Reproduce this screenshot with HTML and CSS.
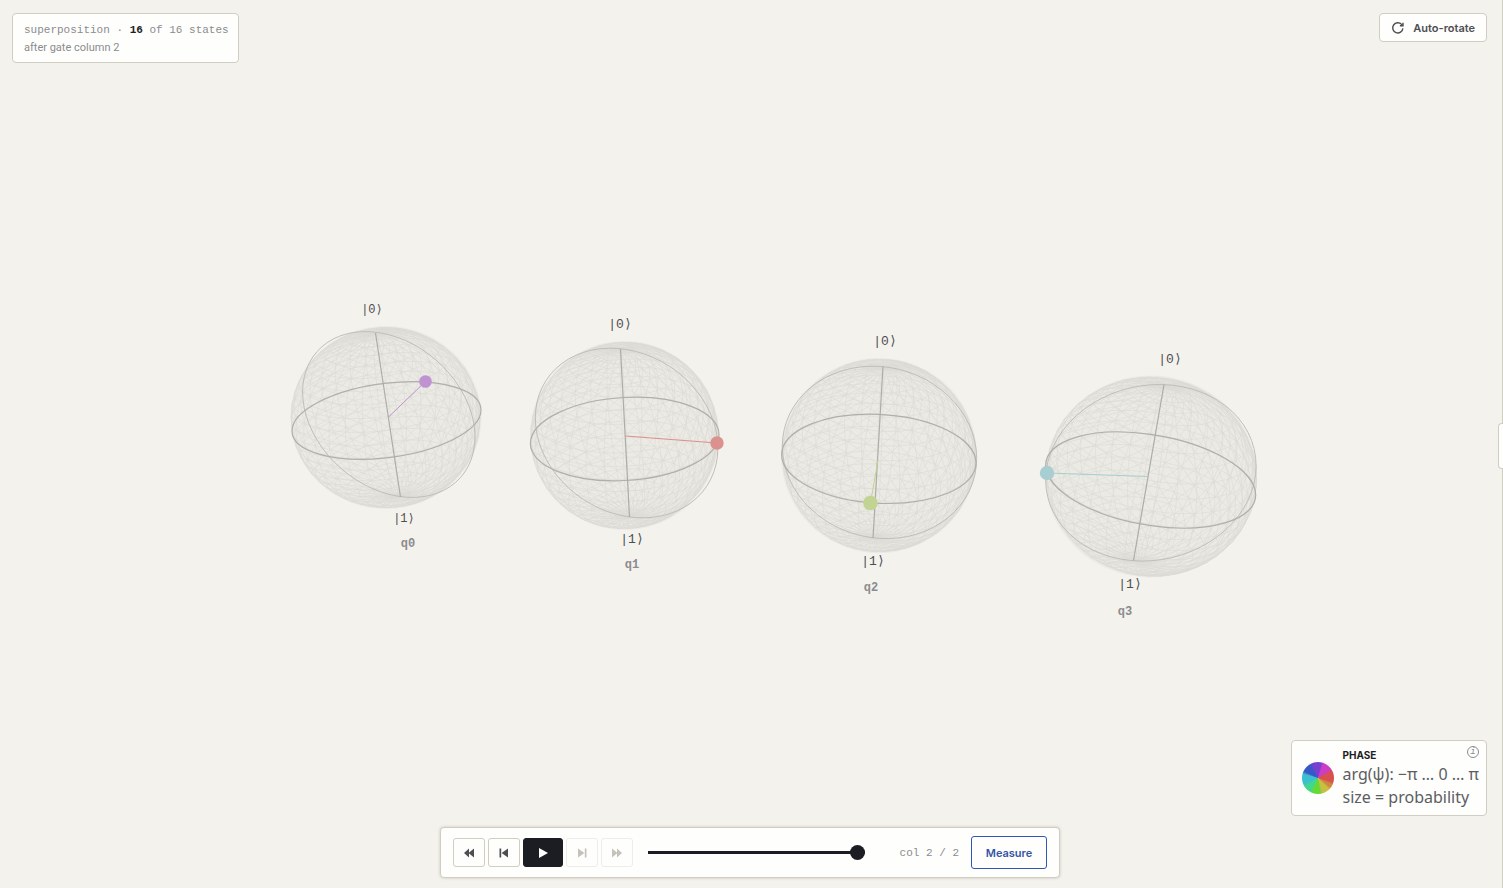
FILE: index.html
```html
<!DOCTYPE html>
<html lang="en">

<head>
	<meta charset="UTF-8">
	<meta name="viewport" content="width=device-width, initial-scale=1.0">
	<title>Bloch spheres</title>
	<link rel="stylesheet" href="styles.css">
</head>

<body>
	<main id="stage">
		<svg id="scene" viewBox="0 0 1502 888" role="img" aria-label="Bloch spheres for q0 to q3">
			<g class="sphere">
				<ellipse class="ball" cx="386" cy="417.5" rx="95.5" ry="91.5" />
				<path class="mesh" data-frame="386 417.5 94.5 -10.5 37.3 -12.5 -82" />
				<circle class="meridian" r="1" transform="matrix(86.2 22.5 0 79.8 388.8 414.5)" />
				<circle class="equator" r="1" transform="matrix(94.5 -10.5 0 37.3 386.5 420.5)" />
				<path class="axis" d="M375.5 333L400.5 497" />
				<path stroke="#bd92cf" d="M388.5 417L425.5 381.5" />
				<circle fill="#bf93d2" cx="425.5" cy="381.5" r="6.3" />
				<text class="ket small" x="372" y="313">|0⟩</text>
				<text class="ket small" x="404" y="522">|1⟩</text>
				<text class="qubit" x="408" y="547">q0</text>
			</g>
			<g class="sphere">
				<ellipse class="ball" cx="624.5" cy="435.5" rx="94.5" ry="94.5" />
				<path class="mesh" data-frame="624.5 435.5 94.3 -4.6 41.5 -4.5 -84" />
				<circle class="meridian" r="1" transform="matrix(91.3 15 0 83.5 626.6 433)" />
				<circle class="equator" r="1" transform="matrix(94.3 -4.6 0 41.5 624.7 439)" />
				<path class="axis" d="M620.5 349L629.5 517" />
				<path stroke="#de8e8a" d="M625.5 436L717 443" />
				<circle fill="#db918d" cx="717" cy="443" r="6.7" />
				<text class="ket" x="620" y="328">|0⟩</text>
				<text class="ket" x="632" y="543">|1⟩</text>
				<text class="qubit" x="632" y="568">q1</text>
			</g>
			<g class="sphere">
				<ellipse class="ball" cx="879" cy="455.5" rx="98" ry="97.5" />
				<path class="mesh" data-frame="879 455.5 97.2 4.2 44.5 4.5 -86" />
				<circle class="meridian" r="1" transform="matrix(97.2 6 0 86 879.5 452.4)" />
				<circle class="equator" r="1" transform="matrix(97.2 4.2 0 44.5 878.8 458.8)" />
				<path class="axis" d="M883 366.5L873 538" />
				<path stroke="#c2d394" d="M878 460L870.5 503" />
				<circle fill="#c1d494" cx="870.5" cy="503" r="7.3" />
				<text class="ket" x="885" y="345">|0⟩</text>
				<text class="ket" x="873" y="565">|1⟩</text>
				<text class="qubit" x="871" y="591">q2</text>
			</g>
			<g class="sphere">
				<ellipse class="ball" cx="1151" cy="476.5" rx="106" ry="101" />
				<path class="mesh" data-frame="1151 476.5 105 15 45.7 15.5 -88" />
				<circle class="meridian" r="1" transform="matrix(105.2 -7 0 88 1150.9 472.8)" />
				<circle class="equator" r="1" transform="matrix(105 15 0 45.7 1150.7 480)" />
				<path class="axis" d="M1164 384.5L1133.5 560.5" />
				<path stroke="#a6ced0" d="M1148 476.5L1047 473" />
				<circle fill="#a8ced1" cx="1047" cy="473" r="7.2" />
				<text class="ket" x="1170" y="363">|0⟩</text>
				<text class="ket" x="1130" y="588">|1⟩</text>
				<text class="qubit" x="1125" y="615">q3</text>
			</g>
		</svg>
	</main>

	<section id="status" class="panel">
		<div class="mono">superposition · <b>16</b> of 16 states</div>
		<div>after gate column 2</div>
	</section>

	<button id="rotate" class="panel" type="button">
		<svg width="14" height="14" viewBox="0 0 14 14">
			<path fill="none" stroke="currentColor" stroke-width="1.4" d="M11.9 7.4A5.1 5.1 0 1 1 10.6 3.4L11.7 4.5M12 1.7V4.7H8.9" />
		</svg>
		Auto-rotate
	</button>

	<section id="legend" class="panel">
		<div class="wheel"></div>
		<div>
			<h2>PHASE</h2>
			<p>arg(ψ): −π … 0 … π</p>
			<p>size = probability</p>
		</div>
		<button class="info" type="button" aria-label="About phase">i</button>
	</section>

	<nav id="player" class="panel">
		<div class="steps">
			<button type="button" aria-label="First"><svg width="12" height="10"><path d="M1 5L6 0.5V9.5ZM5.5 5L11 0.5V9.5Z" /></svg></button>
			<button type="button" aria-label="Previous"><svg width="12" height="10"><path d="M1.5 0.5H3.2V9.5H1.5ZM3.6 5L10 0.5V9.5Z" /></svg></button>
			<button type="button" class="play" aria-label="Play"><svg width="12" height="10"><path d="M2 0L11 5L2 10Z" /></svg></button>
			<button type="button" aria-label="Next" disabled><svg width="12" height="10"><path d="M2 0.5L8.4 5L2 9.5ZM8.8 0.5H10.5V9.5H8.8Z" /></svg></button>
			<button type="button" aria-label="Last" disabled><svg width="12" height="10"><path d="M1 0.5L6.5 5L1 9.5ZM6 0.5L11 5L6 9.5Z" /></svg></button>
		</div>
		<input type="range" min="0" max="2" value="2" aria-label="Gate column">
		<span class="mono">col 2 / 2</span>
		<button type="button" class="measure">Measure</button>
	</nav>

	<button id="drawer" type="button" aria-label="Open side panel"></button>

	<script src="mesh.js"></script>
</body>

</html>
```
FILE: styles.css
```css
* {
	box-sizing: border-box;
}

html,
body {
	margin: 0;
	height: 100%;
	overflow: hidden;
	background-color: #f4f2ed;
	color: #8b8c8f;
	font-family: Roboto, sans-serif;
	font-size: 11px;
}

button {
	font: inherit;
	color: inherit;
	padding: 0;
	cursor: pointer;
}

#stage {
	height: 100%;
	border-right: 1px solid #d0cdc2;
}

#scene {
	display: block;
	width: 100%;
	height: 100%;
}

.sphere path {
	fill: none;
}

.ball {
	fill: #ebeae5;
}

.sphere .mesh {
	stroke: #dcdbd5;
	stroke-width: 1;
	stroke-opacity: 0.6;
}

.equator,
.meridian {
	fill: none;
	stroke: #b0afaa;
	stroke-width: 1.2;
	vector-effect: non-scaling-stroke;
}

.meridian {
	stroke: #bfbeb9;
	stroke-width: 1;
}

.axis {
	stroke: #adaca8;
	stroke-width: 1.2;
}

.ket,
.qubit {
	font-family: "Liberation Mono", "DejaVu Sans Mono", monospace;
	text-anchor: middle;
}

.ket {
	font-size: 13px;
	fill: #4d4e52;
}

.ket.small {
	font-size: 12px;
}

.qubit {
	font-size: 12px;
	font-weight: bold;
	fill: #8b8c8f;
}

.mono {
	font-family: "Liberation Mono", monospace;
}

.panel {
	position: absolute;
	background-color: #fefefd;
	border: 1px solid #d0cdc2;
	border-radius: 4px;
}

#status {
	top: 13px;
	left: 12px;
	padding: 8px 9px 6px 11px;
	line-height: 17px;
}

#status b {
	color: #1c1d22;
}

#rotate {
	display: flex;
	align-items: center;
	gap: 8px;
	top: 13px;
	right: 16px;
	height: 29px;
	padding: 0 11px;
	color: #4d4e52;
	font-family: Inter, sans-serif;
	font-weight: 600;
}

#legend {
	display: flex;
	align-items: center;
	gap: 9px;
	right: 16px;
	bottom: 72px;
	padding: 6px 7px 6px 10px;
}

#legend h2 {
	margin: 0;
	color: #1c1d22;
	font-family: Inter, sans-serif;
	font-size: 10px;
	font-weight: 700;
	line-height: 16px;
}

#legend p {
	margin: 0;
	color: #5c5d61;
	font-family: "Noto Sans", sans-serif;
	font-size: 16px;
	line-height: 23px;
}

.wheel {
	width: 32px;
	height: 32px;
	border-radius: 50%;
	background: conic-gradient(#7840d0 0 12deg, #cc3cc4 20deg 54deg, #d85050 64deg 104deg, #d08840 116deg 126deg, #c8c040 136deg 162deg, #68d838 172deg 200deg, #40d88c 212deg 236deg, #3cc0d0 248deg 284deg, #3858c8 296deg 328deg, #7840d0 340deg);
}

.info {
	position: absolute;
	top: 5px;
	right: 7px;
	width: 12px;
	height: 12px;
	border: 1px solid #8b8c8f;
	border-radius: 50%;
	background: none;
	font-family: "Liberation Mono", monospace;
	font-size: 9px;
	font-style: italic;
	line-height: 10px;
}

#player {
	display: flex;
	align-items: center;
	left: 0;
	right: 3px;
	bottom: 10px;
	width: 620px;
	max-width: 100%;
	height: 51px;
	margin: 0 auto;
	padding: 0 12px;
	box-shadow: 0 0 3px #c9c6bb;
}

.steps {
	display: flex;
	gap: 3px;
}

.steps button {
	display: flex;
	align-items: center;
	justify-content: center;
	width: 32px;
	height: 29px;
	border: 1px solid #d0cdc2;
	border-radius: 3px;
	background: #fefefd;
	color: #4d4e52;
}

.steps svg {
	fill: currentColor;
}

.steps .play {
	width: 40px;
	border-color: #1c1d22;
	background: #1c1d22;
	color: #fff;
}

.steps button:disabled {
	border-color: #eeede9;
	color: #c4c2b9;
}

#player input {
	flex: 1;
	min-width: 0;
	height: 15px;
	margin: 0 35px 0 15px;
	appearance: none;
	background: linear-gradient(#1c1d22, #1c1d22) center / 100% 3px no-repeat;
}

#player input::-webkit-slider-thumb {
	appearance: none;
	width: 15px;
	height: 15px;
	border-radius: 50%;
	background: #1c1d22;
}

.measure {
	width: 76px;
	height: 33px;
	margin-left: 12px;
	border: 1px solid #3156b8;
	border-radius: 3px;
	background: #fefefd;
	color: #3454a5;
	font-family: Inter, sans-serif;
	font-weight: 600;
}

#drawer {
	position: absolute;
	top: 423px;
	right: 0;
	width: 5px;
	height: 46px;
	border: 1px solid #d0cdc2;
	border-right: none;
	border-radius: 4px 0 0 4px;
	background: #fefefd;
}
```
FILE: mesh.js
```js
const COLS = 32;
const ROWS = 22;

// frame: centre x y, equator vector x y, front vector y, pole vector x y
function meshPath([cx, cy, ax, ay, by, nx, ny]) {
	const tilt = by / ax;
	const point = (col, row) => {
		const lon = col / COLS * Math.PI * 2;
		const lat = (row / ROWS - 0.5) * Math.PI;
		const x = Math.cos(lat) * Math.cos(lon);
		const z = Math.cos(lat) * Math.sin(lon);
		const y = Math.sin(lat);
		const depth = z * Math.sqrt(1 - tilt * tilt) + y * tilt;
		const s = (1 + 0.08 * depth) * 0.99;
		return (cx + s * (x * ax + y * nx)).toFixed(1) + ' ' + (cy + s * (x * ay + z * by + y * ny)).toFixed(1);
	};

	let d = '';
	for (let row = 0; row < ROWS; row++) {
		for (let col = 0; col < COLS; col++) {
			d += `M${point(col, row)}L${point(col, row + 1)}L${point(col + 1, row)}L${point(col, row)}`;
		}
	}
	return d;
}

document.querySelectorAll('.mesh').forEach(path => {
	path.setAttribute('d', meshPath(path.dataset.frame.split(' ').map(Number)));
});
```
